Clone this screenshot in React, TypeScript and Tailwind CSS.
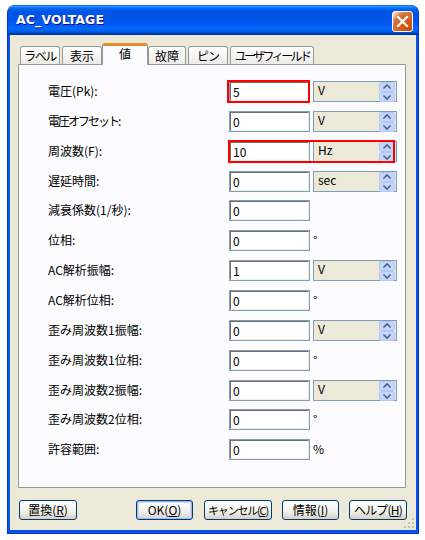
import React from 'react';

type Row = {
  label: string;
  value: string;
  unit?: string;
  combo?: boolean;
  h: number;
  red?: 'input' | 'both';
  track?: string;
};

const rows: Row[] = [
  { label: '電圧(Pk):', value: '5', unit: 'V', combo: true, h: 30, red: 'input' },
  { label: '電圧オフセット:', value: '0', unit: 'V', combo: true, h: 30, track: 'tracking-[-2px]' },
  { label: '周波数(F):', value: '10', unit: 'Hz', combo: true, h: 30, red: 'both' },
  { label: '遅延時間:', value: '0', unit: 'sec', combo: true, h: 29 },
  { label: '減衰係数(1/秒):', value: '0', h: 30 },
  { label: '位相:', value: '0', unit: '°', h: 30 },
  { label: 'AC解析振幅:', value: '1', unit: 'V', combo: true, h: 30 },
  { label: 'AC解析位相:', value: '0', unit: '°', h: 30 },
  { label: '歪み周波数1振幅:', value: '0', unit: 'V', combo: true, h: 30 },
  { label: '歪み周波数1位相:', value: '0', unit: '°', h: 30 },
  { label: '歪み周波数2振幅:', value: '0', unit: 'V', combo: true, h: 29 },
  { label: '歪み周波数2位相:', value: '0', unit: '°', h: 30 },
  { label: '許容範囲:', value: '0', unit: '%', h: 30 },
];

const tabs = [
  { name: 'ラベル', w: 40, ml: 0, track: 'tracking-[-1.5px]' },
  { name: '表示', w: 40, ml: 2, track: '' },
  { name: '値', w: 46, ml: 0, active: true, track: '' },
  { name: '故障', w: 38, ml: 0, track: '' },
  { name: 'ピン', w: 40, ml: 2, track: 'tracking-[-1px]' },
  { name: 'ユーザフィールド', w: 84, ml: 2, track: 'tracking-[-2.6px]' },
];

function Spinner() {
  return (
    <svg width="16" height="20" viewBox="0 0 16 20" className="block">
      <rect x="0.5" y="0.5" width="15" height="9" rx="1.5" fill="#C4D5FC" stroke="#B5C8F5" />
      <rect x="0.5" y="10.5" width="15" height="9" rx="1.5" fill="#C4D5FC" stroke="#B5C8F5" />
      <path d="M4.5 6.5 L8 3 L11.5 6.5" fill="none" stroke="#4D6185" strokeWidth="1.6" />
      <path d="M4.5 13.5 L8 17 L11.5 13.5" fill="none" stroke="#4D6185" strokeWidth="1.6" />
    </svg>
  );
}

function TextBox({ value }: { value: string }) {
  return (
    <div className="w-[81px] h-[21px] border border-[#7F9DB9] bg-white">
      <div className="h-full border-t border-l border-[#716F64] border-r-[#F1EFE2] border-b-[#F1EFE2] border-r border-b pl-[2px] text-[12px] leading-[17px] text-black">
        {value}
      </div>
    </div>
  );
}

function Combo({ unit }: { unit: string }) {
  return (
    <div className="ml-[3px] w-[84px] h-[21px] border border-[#7F9DB9] bg-[#ECE9D8] flex justify-between">
      <span className="pl-[4px] pt-[1px] text-[12px] leading-[14px] text-black">{unit}</span>
      <div className="pr-[1px]">
        <Spinner />
      </div>
    </div>
  );
}

function Button({
  children,
  primary,
  w,
  text = 'text-[12px]',
}: {
  children: React.ReactNode;
  primary?: boolean;
  w: number;
  text?: string;
}) {
  return (
    <div
      className={
        'h-[20px] rounded-[3px] border border-[#003C74] bg-[linear-gradient(#FFFFFF,#F0F0EA_60%,#D6D0C5)] flex items-center justify-center whitespace-nowrap leading-[14px] text-black ' +
        text +
        (primary ? ' shadow-[inset_0_0_0_1px_#9DB8EB,inset_0_0_0_2px_#CEDCF5]' : '')
      }
      style={{ width: w }}
    >
      {children}
    </div>
  );
}

export default function App() {
  return (
    <div className="w-[425px] h-[540px] bg-white pt-[5px] pl-[7px] font-['Noto_Sans_CJK_JP',sans-serif]">
      <div className="w-[412px] h-[529px] rounded-t-[8px] bg-[#0A54E0] border border-[#0831D9] border-t-0 flex flex-col overflow-hidden">
        {/* title bar */}
        <div className="h-[30px] shrink-0 flex items-center justify-between pl-[8px] pr-[5px] bg-[linear-gradient(#0058EE_0%,#3593FF_4%,#288EFF_6%,#127DFF_8%,#036FFC_10%,#0262EE_14%,#0057E5_20%,#0054E3_24%,#0055EB_56%,#005BF5_66%,#026AFE_76%,#0062EF_86%,#0052D6_92%,#0040AB_94%,#003092_100%)]">
          <span className="font-['DejaVu_Sans',sans-serif] font-bold text-[12.5px] tracking-[0.1px] text-white [text-shadow:1px_1px_#0F1089] mt-[1px]">
            AC_VOLTAGE
          </span>
          <div className="w-[21px] h-[21px] mt-[2px] rounded-[3px] border border-white bg-[radial-gradient(circle_at_90%_90%,#CC4600_0%,#DC6527_55%,#CD7546_70%,#FFCCB2_90%,#FFFFFF_100%)] flex items-center justify-center">
            <svg width="13" height="13" viewBox="0 0 13 13">
              <path d="M2 2 L11 11 M11 2 L2 11" stroke="white" strokeWidth="2.2" strokeLinecap="square" />
            </svg>
          </div>
        </div>

        {/* client area */}
        <div className="flex-1 mx-[2px] mb-[3px] bg-[#ECE9D8] flex flex-col relative">
          {/* tabs */}
          <div className="h-[29px] pl-[10px] flex items-end relative z-10">
            {tabs.map((t) =>
              t.active ? (
                <div
                  key={t.name}
                  className="h-[22px] -mb-px bg-[#FCFCFE] border border-[#919B9C] border-b-0 border-t-[3px] border-t-[#E68B2C] rounded-t-[3px] flex justify-center whitespace-nowrap text-[12px] leading-[15px] text-black"
                  style={{ width: t.w, marginLeft: t.ml }}
                >
                  {t.name}
                </div>
              ) : (
                <div
                  key={t.name}
                  className={
                    'h-[18px] bg-[linear-gradient(#FFFFFF,#ECEBE6)] border border-[#919B9C] border-b-0 rounded-t-[3px] flex justify-center whitespace-nowrap text-[12px] leading-[17px] text-black ' +
                    t.track
                  }
                  style={{ width: t.w, marginLeft: t.ml }}
                >
                  {t.name}
                </div>
              )
            )}
          </div>

          {/* panel */}
          <div className="ml-[8px] w-[388px] h-[424px] border border-[#919B9C] bg-[#FCFCFE] pt-[16px] pl-[29px]">
            {rows.map((r) => (
              <div key={r.label} className="relative flex items-start" style={{ height: r.h }}>
                <div
                  className={
                    'w-[181px] h-[21px] text-[12px] leading-[19px] text-black whitespace-nowrap ' + (r.track ?? '')
                  }
                >
                  {r.label}
                </div>
                <TextBox value={r.value} />
                {r.combo && r.unit ? (
                  <Combo unit={r.unit} />
                ) : r.unit ? (
                  <span className="ml-[3px] text-[12px] leading-[19px] text-black">{r.unit}</span>
                ) : null}
                {r.red === 'input' && (
                  <div className="absolute left-[179px] top-[-1px] w-[83px] h-[23px] border-2 border-[#FF0000]" />
                )}
                {r.red === 'both' && (
                  <div className="absolute left-[180px] top-[-1px] w-[167px] h-[23px] border-2 border-[#FF0000]" />
                )}
              </div>
            ))}
          </div>

          {/* buttons */}
          <div className="flex pl-[9px] mt-[12px]">
            <Button w={58}>
              置換(<span className="underline">R</span>)
            </Button>
            <div className="ml-[59px]">
              <Button w={57} primary>
                OK(<span className="underline">O</span>)
              </Button>
            </div>
            <div className="ml-[11px]">
              <Button w={68} text="text-[11px] tracking-[-1.2px]">
                キャンセル(<span className="underline">C</span>)
              </Button>
            </div>
            <div className="ml-[10px]">
              <Button w={57}>
                情報(<span className="underline">I</span>)
              </Button>
            </div>
            <div className="ml-[10px]">
              <Button w={58} text="text-[12px] tracking-[-0.8px]">
                ヘルプ(<span className="underline">H</span>)
              </Button>
            </div>
          </div>

          {/* size grip */}
          <svg width="12" height="12" viewBox="0 0 12 12" className="absolute right-[1px] bottom-[1px]">
            {[
              [9, 1],
              [5, 5],
              [9, 5],
              [1, 9],
              [5, 9],
              [9, 9],
            ].map(([x, y]) => (
              <rect key={`${x}-${y}`} x={x} y={y} width="2" height="2" fill="#C5C2B2" />
            ))}
          </svg>
        </div>
      </div>
    </div>
  );
}
